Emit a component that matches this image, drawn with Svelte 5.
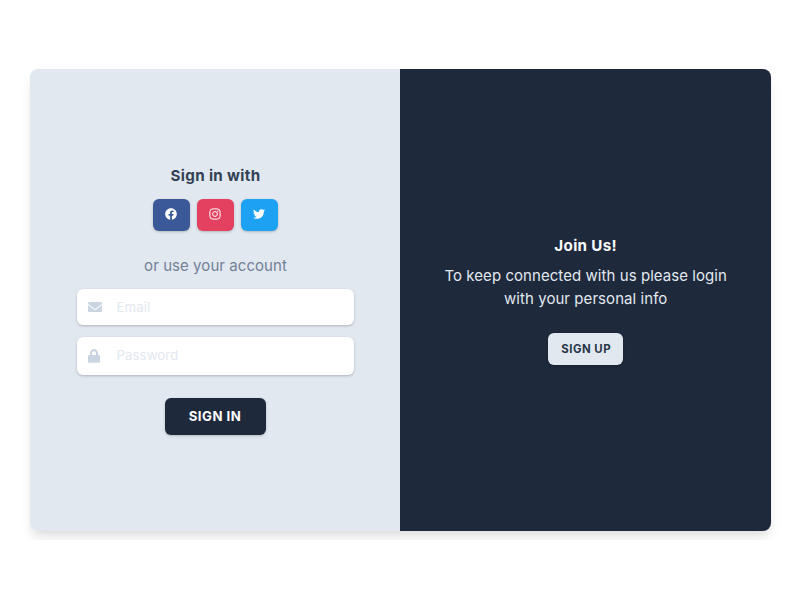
<script>
  let email = $state('');
  let password = $state('');
</script>

<main class="stage">
  <div class="frame">
    <div class="card">
      <section class="signin">
        <h2>Sign in with</h2>
        <div class="socials">
          <button class="social facebook" aria-label="Facebook">
            <svg viewBox="0 0 512 512" width="12" height="12" fill="currentColor"><path d="M504 256C504 119 393 8 256 8S8 119 8 256c0 123.78 90.69 226.38 209.25 245V327.69h-63V256h63v-54.64c0-62.15 37-96.48 93.67-96.48 27.14 0 55.52 4.84 55.52 4.84v61h-31.28c-30.8 0-40.41 19.12-40.41 38.73V256h68.78l-11 71.69h-57.78V501C413.31 482.38 504 379.78 504 256z" /></svg>
          </button>
          <button class="social instagram" aria-label="Instagram">
            <svg viewBox="0 0 24 24" width="12" height="12" fill="none" stroke="currentColor" stroke-width="2"><rect x="1.8" y="1.8" width="20.4" height="20.4" rx="5.8" /><circle cx="12" cy="12" r="4.8" /><circle cx="17.7" cy="6.3" r="1.35" fill="currentColor" stroke="none" /></svg>
          </button>
          <button class="social twitter" aria-label="Twitter">
            <svg viewBox="0 0 512 512" width="12" height="12" fill="currentColor"><path d="M459.37 151.716c.325 4.548.325 9.097.325 13.645 0 138.72-105.583 298.558-298.558 298.558-59.452 0-114.68-17.219-161.137-47.106 8.447.974 16.568 1.299 25.34 1.299 49.055 0 94.213-16.568 130.274-44.832-46.132-.975-84.792-31.188-98.112-72.772 6.498.974 12.995 1.624 19.818 1.624 9.421 0 18.843-1.3 27.614-3.573-48.081-9.747-84.143-51.98-84.143-102.985v-1.299c13.969 7.797 30.214 12.67 47.431 13.319-28.264-18.843-46.781-51.005-46.781-87.391 0-19.492 5.197-37.36 14.294-52.954 51.655 63.675 129.3 105.258 216.365 109.807-1.624-7.797-2.599-15.918-2.599-24.04 0-57.828 46.782-104.934 104.934-104.934 30.213 0 57.502 12.67 76.67 33.137 23.715-4.548 46.456-13.32 66.599-25.34-7.798 24.366-24.366 44.833-46.132 57.827 21.117-2.273 41.584-8.122 60.426-16.243-14.292 20.791-32.161 39.308-52.628 54.253z" /></svg>
          </button>
        </div>
        <p class="alt">or use your account</p>
        <label class="field email">
          <svg viewBox="0 64 512 384" width="14" height="10.5" fill="currentColor"><path d="M48 64C21.5 64 0 85.5 0 112c0 15.1 7.1 29.3 19.2 38.4L236.8 313.6c11.4 8.5 27 8.5 38.4 0L492.8 150.4c12.1-9.1 19.2-23.3 19.2-38.4c0-26.5-21.5-48-48-48H48zM0 176V384c0 35.3 28.7 64 64 64H448c35.3 0 64-28.7 64-64V176L294.4 339.2c-22.8 17.1-54 17.1-76.8 0L0 176z" /></svg>
          <input type="email" placeholder="Email" bind:value={email} />
        </label>
        <label class="field password">
          <svg viewBox="0 0 448 512" width="12" height="13.7" fill="currentColor"><path d="M400 224h-24v-72C376 68.2 307.8 0 224 0S72 68.2 72 152v72H48c-26.5 0-48 21.5-48 48v192c0 26.5 21.5 48 48 48h352c26.5 0 48-21.5 48-48V272c0-26.5-21.5-48-48-48zm-104 0H152v-72c0-39.7 32.3-72 72-72s72 32.3 72 72v72z" /></svg>
          <input type="password" placeholder="Password" bind:value={password} />
        </label>
        <button class="submit">SIGN IN</button>
      </section>
      <section class="join">
        <h2>Join Us!</h2>
        <p>To keep connected with us please login<br />with your personal info</p>
        <button class="signup">SIGN UP</button>
      </section>
    </div>
  </div>
</main>

<style>
  :global(body) {
    margin: 0;
    background: #fff;
  }
  .stage {
    box-sizing: border-box;
    width: 800px;
    height: 600px;
    padding: 60px 0;
    font-family: Inter, 'Liberation Sans', sans-serif;
  }
  .frame {
    box-sizing: border-box;
    height: 480px;
    padding: 8.6px 28.6px 8.8px 30px;
    overflow: hidden;
  }
  .card {
    display: flex;
    height: 462.6px;
    border-radius: 8px;
    box-shadow: 0 9px 14px -3px rgba(0, 0, 0, 0.1), 0 4px 7px -2px rgba(0, 0, 0, 0.06);
  }
  section {
    box-sizing: border-box;
    display: flex;
    flex-direction: column;
    align-items: center;
  }
  .signin {
    width: 370px;
    padding-top: 95.2px;
    background: #e1e8f0;
    border-radius: 8px 0 0 8px;
  }
  .join {
    width: 371.4px;
    padding-top: 165.2px;
    background: #1e293b;
    border-radius: 0 8px 8px 0;
  }
  h2 {
    margin: 0;
    font-size: 15.2px;
    line-height: 23px;
    font-weight: 650;
    letter-spacing: 0.33px;
    color: #334155;
  }
  .signin h2 {
    padding-left: 1px;
  }
  .join h2 {
    color: #f8fafc;
  }
  button {
    padding: 0;
    border: 0;
    border-radius: 6px;
    font-family: inherit;
    box-shadow: 0 1px 3px rgba(0, 0, 0, 0.14), 0 1px 2px rgba(0, 0, 0, 0.08);
  }
  .socials {
    display: flex;
    gap: 7.2px;
    margin-top: 12px;
    padding-left: 1px;
  }
  .social {
    display: flex;
    align-items: center;
    justify-content: center;
    width: 37.2px;
    height: 32.4px;
    padding-bottom: 2px;
    color: #fff;
  }
  .facebook {
    padding-right: 1px;
    background: #3b5998;
    box-sizing: border-box;
    height: 34.4px;
  }
  .socials {
    height: 32.4px;
  }
  .social {
    box-sizing: border-box;
    height: 32.4px;
  }
  .instagram {
    width: 36.4px;
    background: #e4405f;
  }
  .twitter {
    background: #1da1f2;
  }
  .alt {
    margin: 22.8px 0 0;
    padding-left: 1px;
    font-size: 15px;
    line-height: 23px;
    letter-spacing: 0.06px;
    color: #718096;
  }
  .field {
    box-sizing: border-box;
    display: flex;
    align-items: center;
    width: 277px;
    height: 36px;
    padding-left: 11px;
    border-radius: 6px;
    background: #fff;
    color: #cbd5e1;
    box-shadow: 0 1px 3px rgba(0, 0, 0, 0.16), 0 1px 2px rgba(0, 0, 0, 0.08);
  }
  .email {
    margin-top: 12px;
  }
  .password {
    height: 37.6px;
    margin-top: 12px;
  }
  .email input {
    margin-left: 15px;
  }
  .password input {
    margin-left: 17px;
    margin-bottom: 1px;
  }
  input {
    width: 220px;
    padding: 0;
    border: 0;
    outline: 0;
    background: none;
    font: 400 13.2px/20px Inter, 'Liberation Sans', sans-serif;
    letter-spacing: 0.1px;
    color: #334155;
  }
  input::placeholder {
    color: #e2e8f0;
    opacity: 1;
  }
  .submit {
    width: 101px;
    height: 37px;
    margin-top: 23px;
    padding: 0 0 1px;
    background: #1e293b;
    color: #fff;
    font-size: 13.2px;
    font-weight: 650;
    letter-spacing: 0.5px;
  }
  .join p {
    margin: 7px 0 0;
    font-size: 15px;
    line-height: 23px;
    letter-spacing: 0.06px;
    text-align: center;
    color: #e2e8f0;
  }
  .signup {
    width: 75px;
    height: 32.2px;
    margin-top: 22.8px;
    padding-left: 1px;
    background: #e2e8f0;
    color: #283548;
    font-size: 11.4px;
    font-weight: 650;
    letter-spacing: 0.5px;
  }
</style>
